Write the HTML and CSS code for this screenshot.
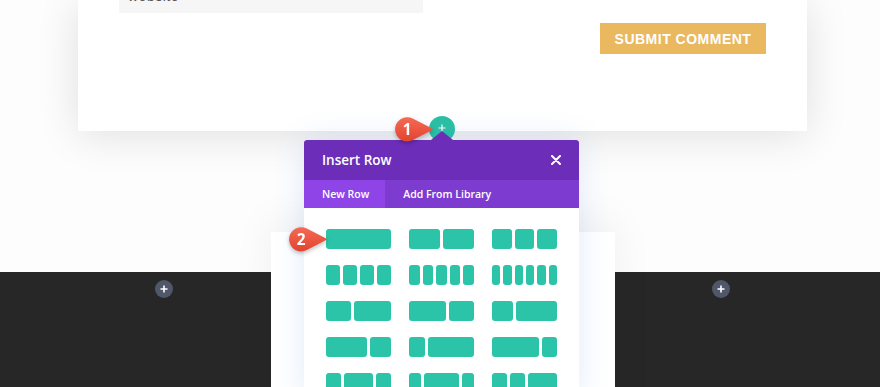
FILE: index.html
```html
<!DOCTYPE html>
<html>
<head>
<meta charset="utf-8">
<link rel="stylesheet" href="styles.css">
</head>
<body>
<div class="page">
  <div class="card">
    <div class="input"><span class="input-text">website</span></div>
    <div class="actions"><button class="submit">Submit Comment</button></div>
  </div>
  <div class="spacer"></div>
  <div class="dark">
    <span class="add add-left"><svg width="8" height="8" viewBox="0 0 8 8"><path d="M4 0.5V7.5M0.5 4H7.5" stroke="#fff" stroke-width="1.6"/></svg></span>
    <span class="add add-right"><svg width="8" height="8" viewBox="0 0 8 8"><path d="M4 0.5V7.5M0.5 4H7.5" stroke="#fff" stroke-width="1.6"/></svg></span>
  </div>

  <div class="panel"></div>
  <span class="teal-add"><svg width="8" height="8" viewBox="0 0 8 8"><path d="M4 0.5V7.5M0.5 4H7.5" stroke="#fff" stroke-width="1.2"/></svg></span>

  <div class="modal">
    <div class="modal-head">
      <span class="title">Insert Row</span>
      <svg class="close" width="10" height="10" viewBox="0 0 10 10"><path d="M1 1L9 9M9 1L1 9" stroke="#fff" stroke-width="2" stroke-linecap="round"/></svg>
    </div>
    <div class="tabs">
      <span class="tab active">New Row</span>
      <span class="tab">Add From Library</span>
    </div>
    <div class="body">
      <div class="layout"><i class="c" style="flex-grow:1"></i></div>
      <div class="layout"><i class="c" style="flex-grow:1"></i><i class="c" style="flex-grow:1"></i></div>
      <div class="layout"><i class="c" style="flex-grow:1"></i><i class="c" style="flex-grow:1"></i><i class="c" style="flex-grow:1"></i></div>

      <div class="layout"><i class="c" style="flex-grow:1"></i><i class="c" style="flex-grow:1"></i><i class="c" style="flex-grow:1"></i><i class="c" style="flex-grow:1"></i></div>
      <div class="layout"><i class="c" style="flex-grow:1"></i><i class="c" style="flex-grow:1"></i><i class="c" style="flex-grow:1"></i><i class="c" style="flex-grow:1"></i><i class="c" style="flex-grow:1"></i></div>
      <div class="layout"><i class="c" style="flex-grow:1"></i><i class="c" style="flex-grow:1"></i><i class="c" style="flex-grow:1"></i><i class="c" style="flex-grow:1"></i><i class="c" style="flex-grow:1"></i><i class="c" style="flex-grow:1"></i></div>

      <div class="layout"><i class="c" style="flex-grow:2"></i><i class="c" style="flex-grow:3"></i></div>
      <div class="layout"><i class="c" style="flex-grow:3"></i><i class="c" style="flex-grow:2"></i></div>
      <div class="layout"><i class="c" style="flex-grow:1"></i><i class="c" style="flex-grow:2"></i></div>

      <div class="layout"><i class="c" style="flex-grow:2"></i><i class="c" style="flex-grow:1"></i></div>
      <div class="layout"><i class="c" style="flex-grow:1"></i><i class="c" style="flex-grow:3"></i></div>
      <div class="layout"><i class="c" style="flex-grow:3"></i><i class="c" style="flex-grow:1"></i></div>

      <div class="layout"><i class="c" style="flex-grow:1"></i><i class="c" style="flex-grow:2"></i><i class="c" style="flex-grow:1"></i></div>
      <div class="layout"><i class="c" style="flex-grow:1"></i><i class="c" style="flex-grow:3"></i><i class="c" style="flex-grow:1"></i></div>
      <div class="layout"><i class="c" style="flex-grow:1"></i><i class="c" style="flex-grow:1"></i><i class="c" style="flex-grow:2"></i></div>
    </div>
  </div>

  <svg class="badge badge-1" width="44" height="31" viewBox="0 0 40 28">
    <defs>
      <linearGradient id="bg1" x1="0" y1="0" x2="0" y2="1">
        <stop offset="0" stop-color="#f56a55"/>
        <stop offset="1" stop-color="#e2432f"/>
      </linearGradient>
    </defs>
    <path d="M17.04 2.23 L36 12 L17.04 21.77 A11 11 0 1 1 17.04 2.23 Z" fill="url(#bg1)"/>
    <text x="12" y="17" text-anchor="middle" class="badge-num">1</text>
  </svg>
  <svg class="badge badge-2" width="44" height="31" viewBox="0 0 40 28">
    <path d="M17.04 2.23 L36 12 L17.04 21.77 A11 11 0 1 1 17.04 2.23 Z" fill="url(#bg1)"/>
    <text x="12" y="17" text-anchor="middle" class="badge-num">2</text>
  </svg>
</div>
</body>
</html>
```

FILE: styles.css
```css
* { box-sizing: border-box; }
html, body { margin: 0; padding: 0; }
body { background: #fdfdfd; font-family: "Open Sans", "Liberation Sans", sans-serif; }

.page {
  position: relative;
  width: 880px;
  height: 387px;
  overflow: hidden;
  background: #fdfdfd;
}

.card {
  margin-left: 78px;
  width: 729px;
  height: 131px;
  background: #fff;
  padding: 0 41px 0 41px;
  box-shadow: 0 4px 40px rgba(0, 0, 0, 0.12);
  position: relative;
  z-index: 1;
}

.input {
  display: block;
  width: 304px;
  height: 13px;
  background: #f6f6f6;
  overflow: hidden;
  padding-left: 9px;
  font-family: "Liberation Sans", Arial, sans-serif;
  font-size: 14px;
  line-height: 16px;
  color: #555;
  letter-spacing: 0.5px;
}
.input-text { display: block; margin-top: -12px; }

.actions {
  display: flex;
  justify-content: flex-end;
  margin-top: 10px;
}
.submit {
  height: 31px;
  width: 166px;
  border: 0;
  padding: 0;
  background: #e9b85f;
  color: #fff;
  font-family: "Liberation Sans", Arial, sans-serif;
  font-weight: 700;
  font-size: 14px;
  letter-spacing: 0.5px;
  text-transform: uppercase;
}

.spacer { height: 141px; }

.dark {
  height: 115px;
  background: #272727;
  display: flex;
  align-items: flex-start;
  padding-top: 8px;
}
.add {
  width: 18px;
  height: 18px;
  border-radius: 50%;
  background: #4f5769;
  display: flex;
  align-items: center;
  justify-content: center;
}
.add-left { margin-left: 155px; }
.add-right { margin-left: auto; margin-right: 150px; }

.panel {
  position: absolute;
  left: 271px;
  top: 232px;
  width: 344px;
  height: 200px;
  background: #fff;
  box-shadow: 0 -10px 40px rgba(0, 0, 0, 0.06);
  z-index: 2;
}

.teal-add {
  position: absolute;
  left: 429px;
  top: 116px;
  width: 26px;
  height: 26px;
  border-radius: 50%;
  background: #2bc1a4;
  display: flex;
  align-items: center;
  justify-content: center;
  padding-bottom: 3px;
  z-index: 3;
}

.modal {
  position: absolute;
  left: 304px;
  top: 140px;
  width: 275px;
  height: 260px;
  background: #fff;
  box-shadow: 0 0 30px rgba(43, 110, 218, 0.14);
  z-index: 4;
}
.modal::before {
  content: "";
  position: absolute;
  left: 127px;
  top: -9px;
  border-left: 11px solid transparent;
  border-right: 11px solid transparent;
  border-bottom: 9px solid #6c2eb9;
}
.modal-head {
  height: 40px;
  background: #6c2eb9;
  border-radius: 3px 3px 0 0;
  display: flex;
  align-items: center;
  justify-content: space-between;
  padding: 0 18px 0 18px;
}
.title {
  color: #fff;
  font-size: 13.5px;
  font-weight: 600;
}

.tabs {
  height: 28px;
  background: #7e3bd0;
  display: flex;
}
.tab {
  color: #fff;
  font-size: 10.5px;
  font-weight: 600;
  line-height: 28px;
  padding: 0 16px 0 18px;
}
.tab.active { background: #8e44e6; }

.body {
  display: grid;
  grid-template-columns: repeat(3, 65px);
  column-gap: 18px;
  row-gap: 16px;
  padding: 21px 0 0 22px;
}
.layout {
  display: flex;
  gap: 3px;
  height: 20px;
}
.c {
  display: block;
  flex-basis: 0;
  background: #2bc4a8;
  border-radius: 3px;
}

.badge {
  position: absolute;
  z-index: 5;
  filter: drop-shadow(0 2px 2px rgba(0, 0, 0, 0.25));
}
.badge-1 { left: 394px; top: 116px; }
.badge-2 { left: 288px; top: 226px; }
.badge-num {
  fill: #fff;
  font-family: "Open Sans", "Liberation Sans", sans-serif;
  font-weight: 700;
  font-size: 14px;
}
```
